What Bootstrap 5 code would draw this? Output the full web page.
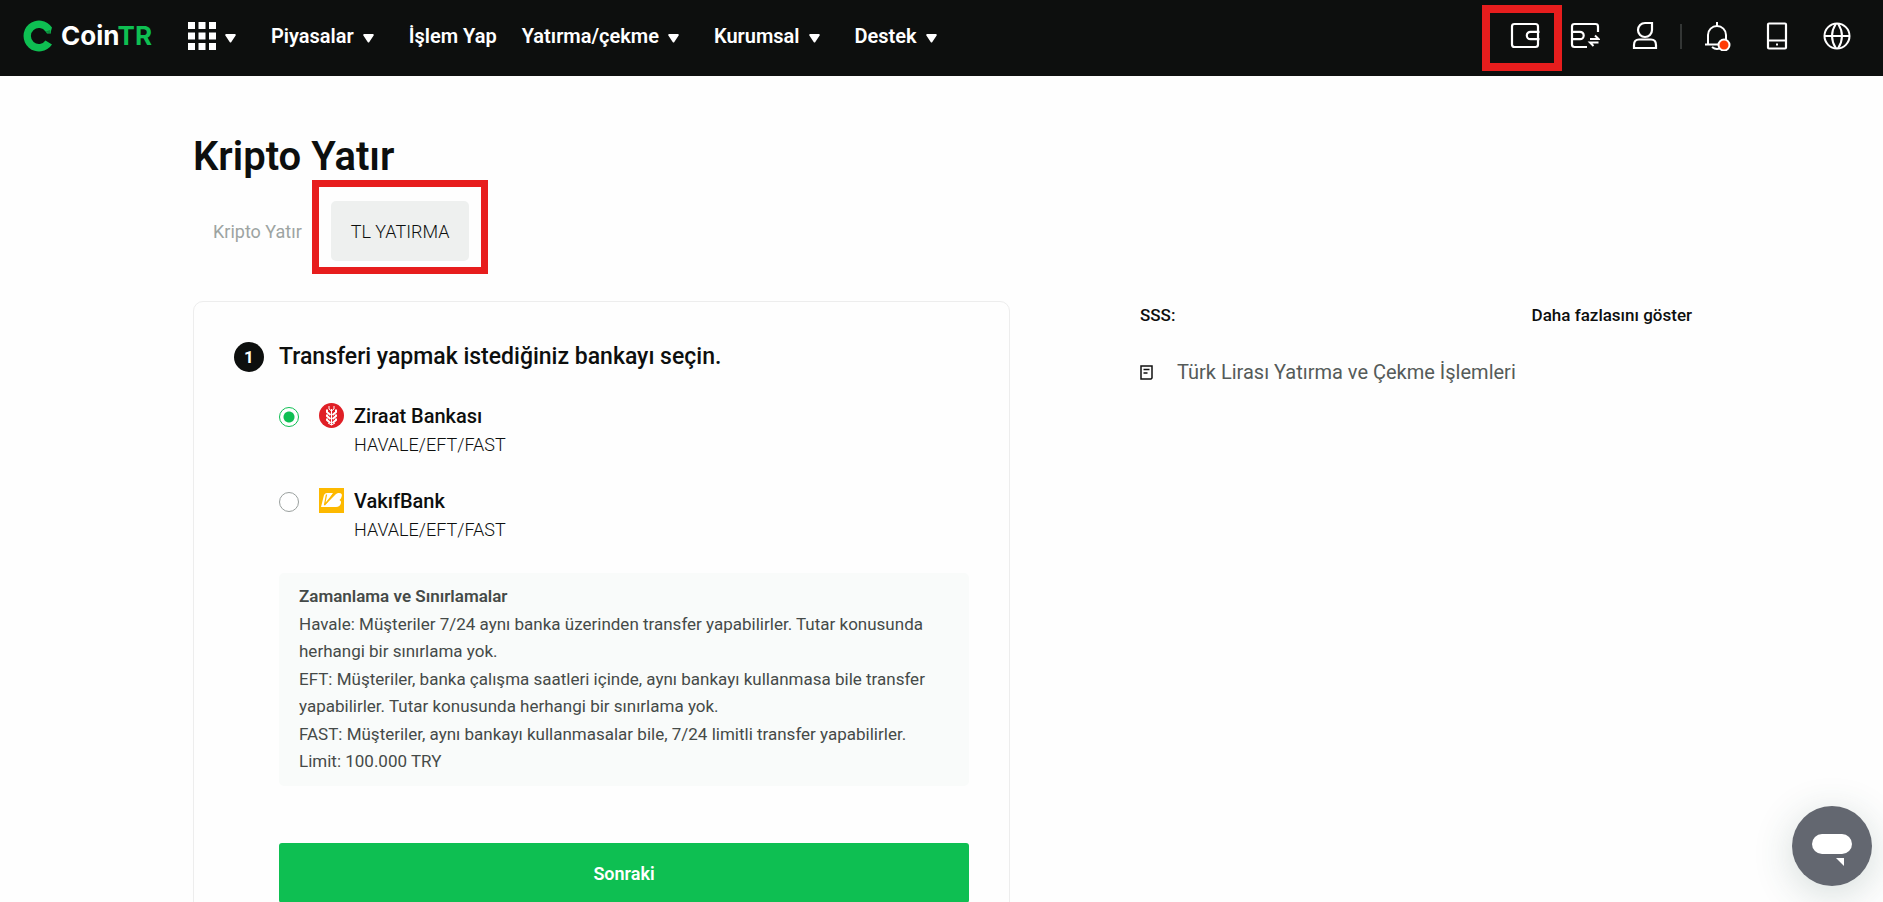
<!DOCTYPE html>
<html lang="tr">
<head>
<meta charset="utf-8">
<meta name="viewport" content="width=device-width, initial-scale=1">
<title>CoinTR - Kripto Yatır</title>
<link href="https://cdn.jsdelivr.net/npm/bootstrap@5.3.0/dist/css/bootstrap.min.css" rel="stylesheet">
<style>
  :root { --ink: #0d0f0e; --brand: #0ebf52; --alert: #e71d1d; }
  body { font-family: Roboto, "Liberation Sans", sans-serif; font-size: 18px; line-height: 28px; color: var(--ink); background: #fefefe; }
  a { color: inherit; text-decoration: none; }
  .topbar { background: var(--ink); height: 76px; padding: 0 16px 4px 23px; }
  .brand-link { gap: 9px; }
  .brand-name { font-family: Inter, sans-serif; font-weight: 700; font-size: 26px; line-height: 32px; color: #fff; }
  .brand-name span { color: var(--brand); }
  .main-menu { margin-left: 36px; gap: 35px; }
  .menu-item { background: none; border: 0; padding: 0; color: #fff; font-size: 20px; font-weight: 600; line-height: 28px; white-space: nowrap; display: flex; align-items: center; gap: 9px; }
  .menu-item .caret { margin-top: 4px; }
  .menu-pair { gap: 25px; }
  .tool { position: relative; width: 60px; height: 40px; background: none; border: 0; padding: 0; color: #fff; display: flex; align-items: center; justify-content: center; }
  .tool svg { fill: none; stroke: currentColor; stroke-width: 2; }
  .tool-divider { width: 2px; height: 25px; background: #333635; margin: 0 5px; }
  .marked { position: relative; }
  .marked::after { content: ""; position: absolute; border: 7px solid var(--alert); pointer-events: none; }
  .tool.marked::after { inset: -11px -7px -15px -13px; border-width: 8px; }
  .tab-link.marked::after { inset: -21px -19px -13px -19px; }
  .page { max-width: 1501px; padding: 57px 0 0 2px; }
  .page-title { font-size: 40px; line-height: 48px; font-weight: 600; margin-bottom: 20px; }
  .tabs { gap: 9px; }
  .tab-link { background: none; border: 0; border-radius: 5px; height: 60px; padding: 2px 20px 0; font-size: 18px; color: #9da4a2; }
  .tab-link.active { background: #eef0ef; color: var(--ink); font-weight: 300; }
  .deposit-grid { display: grid; grid-template-columns: 817fr 552fr; column-gap: 130px; margin-top: 40px; }
  .panel { border: 1px solid #ededed; border-radius: 10px; padding: 40px 40px 60px; }
  .step-head { gap: 15px; margin-bottom: 30px; }
  .step-no { width: 30px; height: 30px; border-radius: 50%; background: var(--ink); color: #fff; font-size: 17px; font-weight: 700; flex: none; }
  .step-title { font-size: 23px; line-height: 30px; font-weight: 500; margin: 0; }
  .step-body { padding-left: 45px; }
  .bank { gap: 20px; margin-bottom: 28px; }
  .bank .form-check-input { width: 20px; height: 20px; margin: 5px 0 0; border: 1px solid #9aa09e; box-shadow: none; background-image: none; flex: none; }
  .bank .form-check-input:checked { border-color: var(--brand); background: radial-gradient(circle, var(--brand) 5px, #fff 6px); }
  .bank label { gap: 10px; }
  .bank-logo { margin-top: 1px; }
  .bank-name { font-size: 20px; line-height: 29px; font-weight: 500; }
  .bank-way { font-weight: 300; }
  .notes { background: #f9fbfa; border-radius: 5px; padding: 10px 20px 11px; margin-top: 29px; color: #454a48; font-size: 17px; line-height: 27px; display: flex; flex-direction: column; gap: 1px; }
  .notes h3 { font-size: 17px; line-height: 27px; font-weight: 600; margin: 0; }
  .notes p { margin: 0; }
  .next-btn { background: var(--brand); color: #fff; border: 0; border-radius: 3px; height: 60px; padding: 2px 0 0; font-size: 18px; font-weight: 600; margin-top: 57px; }
  .faq { font-size: 17px; font-weight: 500; }
  .faq-link { font-size: 20px; font-weight: 400; color: #555b59; gap: 24px; margin-top: 29px; }
  .chat { right: 11px; bottom: 16px; width: 80px; height: 80px; border: 0; border-radius: 50%; background: #636770; padding: 0; box-shadow: 0 8px 40px rgba(40, 80, 70, .2); }
</style>
</head>
<body>
<header class="topbar d-flex align-items-center">
  <a href="#" class="brand-link d-flex align-items-center">
    <svg width="29" height="32" viewBox="0 0 29 32"><path d="M29 7.500A15.500 15.500 0 1 0 29 24.500L22.500 20.500A8 8 0 1 1 22.500 11.500L24 13.500H28V11Z" fill="#0ebf52"/><path d="M21.500 12L28 13.500L27 10Z" fill="#0d0f0e" opacity=".3"/></svg>
    <span class="brand-name">Coin<span>TR</span></span>
  </a>
  <nav class="main-menu d-flex align-items-center">
    <button class="menu-item" aria-label="Uygulamalar"><svg width="28" height="28" viewBox="0 0 28 28" fill="#fff"><path d="M0 0h7v7H0zM10.500 0h7v7h-7zM21 0h7v7h-7zM0 10.500h7v7H0zM10.500 10.500h7v7h-7zM21 10.500h7v7h-7zM0 21h7v7H0zM10.500 21h7v7h-7zM21 21h7v7h-7z"/></svg><svg class="caret" width="11" height="9" viewBox="0 0 11 9"><path d="M1.200 1h8.600L5.500 7.500z" fill="#fff" stroke="#fff" stroke-width="2" stroke-linejoin="round"/></svg></button>
    <button class="menu-item">Piyasalar<svg class="caret" width="11" height="9" viewBox="0 0 11 9"><path d="M1.200 1h8.600L5.500 7.500z" fill="#fff" stroke="#fff" stroke-width="2" stroke-linejoin="round"/></svg></button>
    <div class="menu-pair d-flex">
      <a href="#" class="menu-item">İşlem Yap</a>
      <button class="menu-item">Yatırma/çekme<svg class="caret" width="11" height="9" viewBox="0 0 11 9"><path d="M1.200 1h8.600L5.500 7.500z" fill="#fff" stroke="#fff" stroke-width="2" stroke-linejoin="round"/></svg></button>
    </div>
    <button class="menu-item">Kurumsal<svg class="caret" width="11" height="9" viewBox="0 0 11 9"><path d="M1.200 1h8.600L5.500 7.500z" fill="#fff" stroke="#fff" stroke-width="2" stroke-linejoin="round"/></svg></button>
    <button class="menu-item">Destek<svg class="caret" width="11" height="9" viewBox="0 0 11 9"><path d="M1.200 1h8.600L5.500 7.500z" fill="#fff" stroke="#fff" stroke-width="2" stroke-linejoin="round"/></svg></button>
  </nav>
  <div class="d-flex align-items-center ms-auto">
    <button class="tool marked" aria-label="Cüzdan"><svg width="30" height="30" viewBox="0 0 30 30"><path d="M4.500 3H25.500Q28 3 28 5.500V23.500Q28 26 25.500 26H4.500Q2 26 2 23.500V5.500Q2 3 4.500 3ZM29.500 10.800H20.500A3.700 3.700 0 0 0 20.500 18.200H29.500" stroke-width="2.200"/></svg></button>
    <button class="tool" aria-label="Emirler"><svg width="30" height="30" viewBox="0 0 30 30"><path d="M28 11V5.500Q28 3 25.500 3H4.500Q2 3 2 5.500V23.500Q2 26 4.500 26H17M2 10.800H10A3.700 3.700 0 0 1 10 18.200H2" stroke-width="2.200"/><path d="M20 18H28.500L25 14.500M28.500 21.500H20L23.500 25"/></svg></button>
    <button class="tool" aria-label="Hesap"><svg width="30" height="30" viewBox="0 0 30 30"><path d="M22 2V9A7 7 0 1 1 15 2ZM4 27V24Q4 18.500 9 18.500H21Q26 18.500 26 24V27Z" stroke-width="2.200"/></svg></button>
    <span class="tool-divider"></span>
    <button class="tool" aria-label="Bildirimler"><svg width="30" height="30" viewBox="0 0 30 30"><path d="M15 1V5M3 23.500H27M6 23V14A9 9 0 0 1 24 14V23M10 26Q15 30 20 26"/><circle cx="22" cy="24" r="5.500" fill="#ff3b05"/></svg></button>
    <button class="tool" aria-label="Uygulama"><svg width="30" height="30" viewBox="0 0 30 30"><path d="M7 2.500H23Q24 2.500 24 3.500V26.500Q24 27.500 23 27.500H7Q6 27.500 6 26.500V3.500Q6 2.500 7 2.500ZM6 19.500H24" stroke-width="2.200"/><path d="M14 23.500H16"/></svg></button>
    <button class="tool" aria-label="Dil"><svg width="30" height="30" viewBox="0 0 30 30"><circle cx="15" cy="15" r="12.500"/><path d="M2.500 15H27.500M14 2.500Q6 15 14 27.500M16 2.500Q24 15 16 27.500"/></svg></button>
  </div>
</header>

<main class="page mx-auto">
  <h1 class="page-title">Kripto Yatır</h1>
  <div class="tabs d-flex">
    <button class="tab-link">Kripto Yatır</button>
    <button class="tab-link active marked">TL YATIRMA</button>
  </div>

  <div class="deposit-grid">
    <section class="panel">
      <div class="step-head d-flex align-items-center">
        <span class="step-no d-flex align-items-center justify-content-center">1</span>
        <h2 class="step-title">Transferi yapmak istediğiniz bankayı seçin.</h2>
      </div>
      <div class="step-body">
        <div class="bank d-flex">
          <input class="form-check-input" type="radio" name="bank" id="ziraat" checked>
          <label for="ziraat" class="d-flex">
            <svg class="bank-logo" width="25" height="25" viewBox="0 0 25 25"><circle cx="12.500" cy="12.500" r="12.500" fill="#e01f26"/><g fill="none" stroke="#fff" stroke-width="2"><path d="M8 6.500V9L11.500 12M17 6.500V9L13.500 12M8 11.500V13L11.500 16M17 11.500V13L13.500 16M8 15.500V17L11.500 20M17 15.500V17L13.500 20"/><path d="M12.500 6V22M10 3V6L12.500 8L15 6V3M9 20L12.500 22L16 20" stroke-width="1"/></g></svg>
            <span class="d-flex flex-column"><span class="bank-name">Ziraat Bankası</span><span class="bank-way">HAVALE/EFT/FAST</span></span>
          </label>
        </div>
        <div class="bank d-flex">
          <input class="form-check-input" type="radio" name="bank" id="vakif">
          <label for="vakif" class="d-flex">
            <svg class="bank-logo" width="25" height="25" viewBox="0 0 25 25"><path d="M0 0h25v25H0z" fill="#fdb900"/><path d="M5 7Q6 5 8 5H14L6 17L17 6L19 5H20Q24 5 22.500 9Q22 11 20.500 12Q22.500 13 22 15Q21 19 17 19H2Z" fill="#fff"/><path d="M7.500 6.500L5.500 17L15 5.500" fill="none" stroke="#fdb900" stroke-width="1.300"/></svg>
            <span class="d-flex flex-column"><span class="bank-name">VakıfBank</span><span class="bank-way">HAVALE/EFT/FAST</span></span>
          </label>
        </div>
        <div class="notes">
          <h3>Zamanlama ve Sınırlamalar</h3>
          <p>Havale: Müşteriler 7/24 aynı banka üzerinden transfer yapabilirler. Tutar konusunda herhangi bir sınırlama yok.</p>
          <p>EFT: Müşteriler, banka çalışma saatleri içinde, aynı bankayı kullanmasa bile transfer yapabilirler. Tutar konusunda herhangi bir sınırlama yok.</p>
          <p>FAST: Müşteriler, aynı bankayı kullanmasalar bile, 7/24 limitli transfer yapabilirler. Limit: 100.000 TRY</p>
        </div>
        <button class="next-btn w-100">Sonraki</button>
      </div>
    </section>
    <aside class="faq">
      <div class="d-flex justify-content-between">
        <span>SSS:</span>
        <a href="#">Daha fazlasını göster</a>
      </div>
      <a href="#" class="faq-link d-flex align-items-center">
        <svg width="13" height="15" viewBox="0 0 13 15"><path d="M1 1H12V13L11 14H1ZM3.500 4.500H9.500M3.500 8H7.500" fill="none" stroke="#111" stroke-width="1.500"/></svg>
        Türk Lirası Yatırma ve Çekme İşlemleri
      </a>
    </aside>
  </div>
</main>

<button class="chat position-fixed" aria-label="Canlı destek"><svg class="d-block" width="80" height="80" viewBox="0 0 80 80" fill="#fff"><rect x="20" y="28" width="40" height="20" rx="10"/><path d="M44 52H52V60Z"/></svg></button>
<script src="https://cdn.jsdelivr.net/npm/bootstrap@5.3.0/dist/js/bootstrap.bundle.min.js"></script>
</body>
</html>
